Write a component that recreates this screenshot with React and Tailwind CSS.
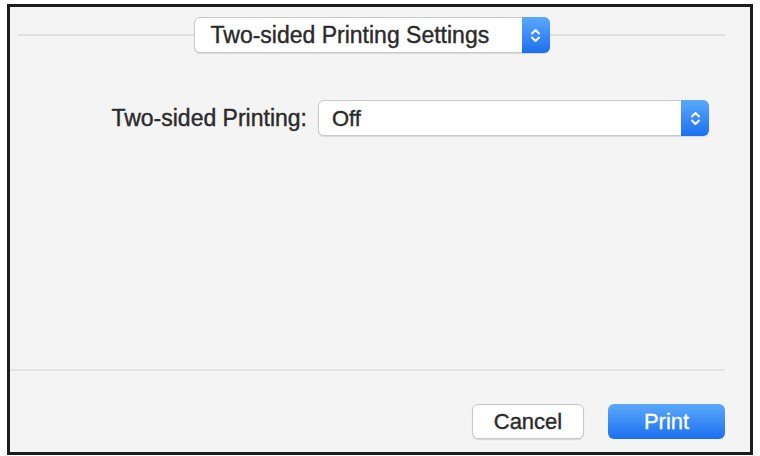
import React from "react";

function Chevrons() {
  return (
    <svg width="11" height="17" viewBox="0 0 11 17" fill="none">
      <path d="M2 6.5L5.5 3L9 6.5" stroke="white" strokeWidth="1.9" strokeLinecap="round" strokeLinejoin="round" />
      <path d="M2 10.5L5.5 14L9 10.5" stroke="white" strokeWidth="1.9" strokeLinecap="round" strokeLinejoin="round" />
    </svg>
  );
}

function PopUp({ text, className, textClass }) {
  return (
    <div
      className={`flex h-[36px] items-stretch rounded-[6px] border border-[#c9c9c9] bg-white shadow-[0_1px_1px_rgba(0,0,0,0.12)] ${className}`}
    >
      <div className={`flex flex-1 items-center text-[22px] text-[#2b2b2b] [-webkit-text-stroke:0.4px_#2b2b2b] ${textClass}`}>
        {text}
      </div>
      <div className="-my-px -mr-px flex w-[28px] items-center justify-center rounded-r-[6px] bg-gradient-to-b from-[#5aa8fa] to-[#1b6ff0]">
        <Chevrons />
      </div>
    </div>
  );
}

export default function App() {
  return (
    <div
      className="h-[456px] w-[760px] bg-white pl-[7px] pt-[4px]"
      style={{ fontFamily: '"Liberation Sans", Arial, sans-serif' }}
    >
      <div className="flex h-[451px] w-[746px] flex-col border-[3px] border-[#1c1c1c] bg-[#f4f4f4]">
        {/* header popup */}
        <div className="flex items-center pl-[8px] pr-[25px] pt-[10px]">
          <div className="h-[2px] flex-1 bg-[#e0e0e0]" />
          <PopUp
            text="Two-sided Printing Settings"
            className="w-[356px]"
            textClass="pl-[16px] text-[23px]"
          />
          <div className="h-[2px] flex-1 bg-[#e0e0e0]" />
        </div>

        {/* setting row */}
        <div className="mt-[47px] flex items-center">
          <div className="w-[308px] pr-[11px] text-right text-[23px] text-[#2b2b2b] [-webkit-text-stroke:0.4px_#2b2b2b]">
            Two-sided Printing:
          </div>
          <PopUp text="Off" className="w-[391px]" textClass="pl-[13px]" />
        </div>

        <div className="flex-1" />

        <div className="mr-[25px] h-[2px] bg-[#e3e3e3]" />

        {/* buttons */}
        <div className="flex justify-end gap-[24px] pb-[13px] pr-[25px] pt-[33px]">
          <button className="h-[35px] w-[112px] rounded-[6px] border border-[#c6c6c6] bg-white text-[22px] text-[#2b2b2b] shadow-[0_1px_1px_rgba(0,0,0,0.12)] [-webkit-text-stroke:0.4px_#2b2b2b]">
            Cancel
          </button>
          <button className="h-[35px] w-[117px] rounded-[6px] bg-gradient-to-b from-[#5aa8fa] to-[#1b6ff0] text-[22px] text-white [-webkit-text-stroke:0.3px_#ffffff]">
            Print
          </button>
        </div>
      </div>
    </div>
  );
}
